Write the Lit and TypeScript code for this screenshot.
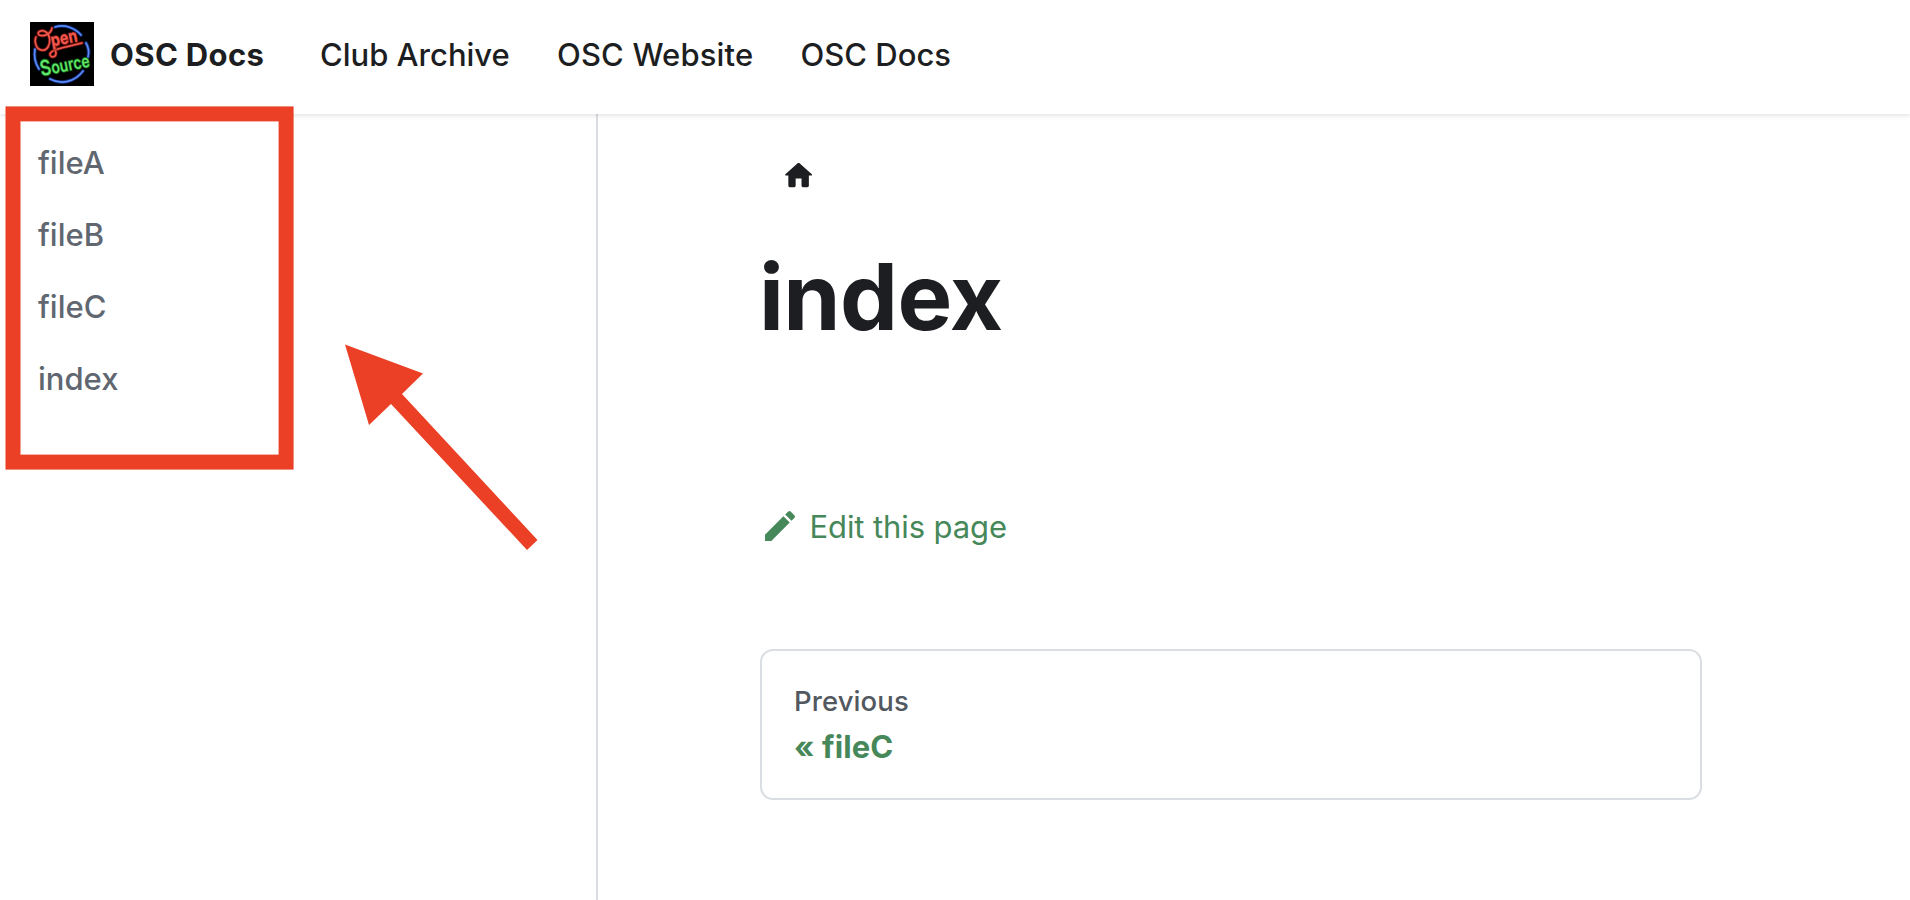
import { LitElement, html, css } from "lit";
import { customElement } from "lit/decorators.js";

@customElement("neon-logo")
class NeonLogo extends LitElement {
  static styles = css`
    :host { display: block; width: 64px; height: 64px; }
    svg { display: block; overflow: visible; }
    .ring { fill: none; stroke: #5b8cf5; stroke-width: 1.7; stroke-linecap: round; }
    .halo { fill: none; stroke: #16359a; stroke-width: 3.6; stroke-linecap: round; opacity: .75; }
    .tube { fill: none; stroke: #f0594d; stroke-width: 1.6; stroke-linecap: round; stroke-linejoin: round; }
    .tube-halo { fill: none; stroke: #8c1712; stroke-width: 3.4; stroke-linecap: round; opacity: .8; }
    text { font-family: Inter, sans-serif; paint-order: stroke; }
    .open { font-size: 17.5px; fill: #f0594d; stroke: #7c1512; stroke-width: 1.6px; }
    .source { font-size: 17px; font-weight: 500; fill: #66e86c; stroke: #12661b; stroke-width: 1.8px; }
    .initial { font-size: 21px; }
  `;
  render() {
    const ring = "M25 5C35 2 45 6 51 13M56 21Q60 28 58 35M5 27Q3 38 9 47M20 57C31 63 45 60 53 49";
    const curl = "M22 6C21 12 14 15 9 13C6 10 12 7 16 10C20 13 21 20 18 25C15 30 8 29 6 23C5 20 5 17 6 15";
    const tail = "M23.5 20L26 31C26 36 20 36 20 32C21 28 27 27 52 21";
    return html`
      <svg width="64" height="64" viewBox="0 0 64 64" role="img" aria-label="Open Source">
        <rect width="64" height="64" fill="#000"></rect>
        <path class="halo" d=${ring}></path>
        <path class="ring" d=${ring}></path>
        <path class="tube-halo" d=${curl + tail}></path>
        <path class="tube" d=${curl + tail}></path>
        <text class="open" x="22" y="24.5" textLength="27" lengthAdjust="spacingAndGlyphs" transform="rotate(-11 22 24.5)">pen</text>
        <text class="source" x="11.5" y="54" textLength="50" lengthAdjust="spacingAndGlyphs" transform="rotate(-11 11.5 54)"><tspan class="initial">S</tspan>ource</text>
      </svg>`;
  }
}

@customElement("app-root")
class AppRoot extends LitElement {
  static styles = css`
    :host {
      display: flex; flex-direction: column; position: relative;
      width: 100%; height: 900px; overflow: hidden; box-sizing: border-box;
      background: #fff; color: #1c1e21;
      font: 400 31px/40px Inter, "Noto Sans", sans-serif;
    }
    * { box-sizing: border-box; }
    a { color: inherit; text-decoration: none; white-space: nowrap; }
    .navbar {
      flex: none; height: 114px; padding: 0 30px 6px; display: flex; align-items: center;
      box-shadow: 0 2px 4px rgba(0, 0, 0, .1); z-index: 1;
    }
    .brand { display: flex; align-items: center; gap: 16px; width: 290px; font-weight: 700; letter-spacing: .35px; }
    .brand span, .links { padding-top: 2px; }
    .links { display: flex; font-weight: 470; letter-spacing: 0; }
    .archive { width: 237px; }
    .website { width: 243.5px; letter-spacing: .15px; }
    .body { flex: 1; display: flex; min-height: 0; }
    .sidebar {
      width: 598px; border-right: 2px solid #dadde1; padding: 29px 38px;
      display: flex; flex-direction: column; gap: 32px; color: #606770; font-weight: 480; letter-spacing: 0;
    }
    .main { flex: 1; display: flex; flex-direction: column; align-items: flex-start; padding: 44px 0 0 162px; }
    .home { display: block; width: 35.2px; height: 35.2px; margin-left: 20.9px; }
    h1 { margin: 49px 0 0 -1px; font-size: 92px; line-height: 110px; font-weight: 700; letter-spacing: -.6px; }
    .edit { display: flex; align-items: center; gap: 10px; margin-top: 154px; height: 40px; color: #468859; letter-spacing: -.1px; }
    .edit span { padding-top: 2px; margin-left: -.5px; }
    .card {
      width: 942px; height: 151px; margin-top: 103px; border: 2px solid #dadde1; border-radius: 13px;
      padding: 32px; display: flex; flex-direction: column;
    }
    .sub { color: #525860; font-size: 27.5px; line-height: 36px; font-weight: 480; letter-spacing: .1px; }
    .label { color: #468859; font-weight: 700; line-height: 40px; margin-top: 7.5px; letter-spacing: .1px; }
    .marks { position: absolute; left: 0; top: 0; z-index: 2; pointer-events: none; }
  `;
  render() {
    return html`
      <nav class="navbar">
        <a class="brand" href="#"><neon-logo></neon-logo><span>OSC Docs</span></a>
        <div class="links">
          <a class="archive" href="#">Club Archive</a>
          <a class="website" href="#">OSC Website</a>
          <a href="#">OSC Docs</a>
        </div>
      </nav>
      <div class="body">
        <aside class="sidebar">
          ${["fileA", "fileB", "fileC", "index"].map((name) => html`<a href="#">${name}</a>`)}
        </aside>
        <main class="main">
          <a class="home" href="#" aria-label="Home page">
            <svg width="35.2" height="35.2" viewBox="0 0 24 24" fill="currentColor"><path d="M10 19v-5h4v5c0 .55.45 1 1 1h3c.55 0 1-.45 1-1v-7h1.7c.46 0 .68-.57.33-.87L12.67 3.6c-.38-.34-.96-.34-1.34 0l-8.36 7.53c-.34.3-.13.87.33.87H5v7c0 .55.45 1 1 1h3c.55 0 1-.45 1-1z"></path></svg>
          </a>
          <h1>index</h1>
          <a class="edit" href="#">
            <svg width="40" height="40" viewBox="0 0 40 40" fill="currentColor"><path d="m34.5 11.7l-3 3.1-6.3-6.3 3.1-3q0.5-0.5 1.2-0.5t1.1 0.5l3.9 3.9q0.5 0.4 0.5 1.1t-0.5 1.2z m-29.5 17.1l18.4-18.5 6.3 6.3-18.4 18.4h-6.3v-6.2z"></path></svg>
            <span>Edit this page</span>
          </a>
          <a class="card" href="#">
            <span class="sub">Previous</span>
            <span class="label">« fileC</span>
          </a>
        </main>
      </div>
      <svg class="marks" width="600" height="600" viewBox="0 0 600 600">
        <rect x="13" y="113.9" width="273.1" height="348.2" fill="none" stroke="#ec4026" stroke-width="15"></rect>
        <polygon points="345,344.5 423,373.5 402,394 537.5,540 527,550 391,404 369,425" fill="#ec4026"></polygon>
      </svg>`;
  }
}
